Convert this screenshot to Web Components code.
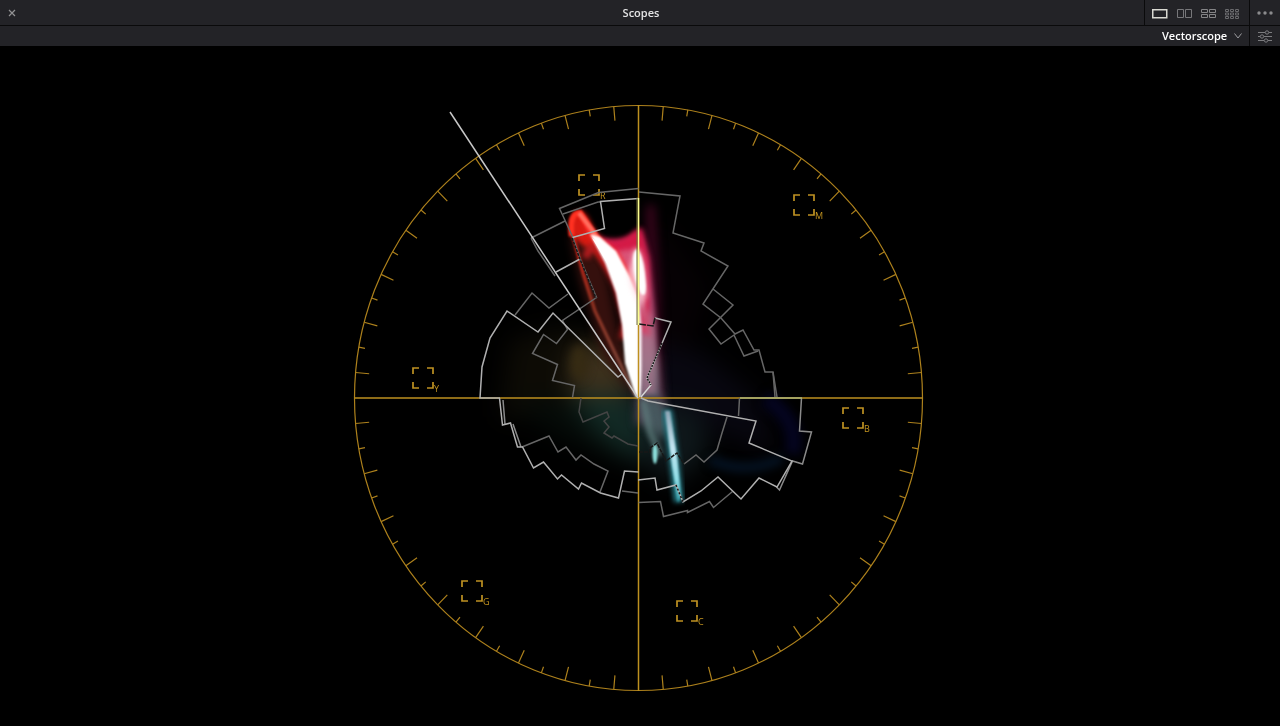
<!DOCTYPE html>
<html lang="en">
<head>
<meta charset="utf-8">
<title>Scopes</title>
<style>
html, body { margin: 0; height: 100%; background: #000; }
body { font-family: "Open Sans", "Noto Sans", sans-serif; font-size: 11px; font-weight: 600; color: #e4e4e5; }
</style>
</head>
<body>
<scopes-app></scopes-app>

<template id="app">
<style>
:host { display: flex; flex-direction: column; height: 100vh; min-height: 320px; }
vector-scope { flex: 1; min-height: 0; }
</style>
<title-bar>Scopes</title-bar>
<scope-toolbar></scope-toolbar>
<vector-scope></vector-scope>
</template>

<template id="titlebar">
<style>
:host { display: grid; grid-template-columns: 1fr auto 1fr; align-items: stretch; height: 25px; background: #232327; border-bottom: 1px solid #0a0a0b; }
button { background: none; border: 0; padding: 0; margin: 0; display: flex; align-items: center; justify-content: center; }
h1 { margin: 0; font: inherit; line-height: 26px; padding-left: 2px; }
.close { width: 24px; }
.end { display: flex; justify-content: flex-end; }
.layouts { display: flex; align-items: center; gap: 8px; padding: 1px 9px 0 7px; border-left: 1px solid #0a0a0b; }
.more { width: 31px; border-left: 1px solid #0a0a0b; }
svg { display: block; }
</style>
<button class="close" aria-label="Close"><svg width="8" height="8" viewBox="0 0 8 8" stroke="#929294" stroke-width="1.2"><path d="M1 1l6 6M7 1l-6 6"/></svg></button>
<h1><slot></slot></h1>
<div class="end">
<div class="layouts">
<button aria-label="Single view"><svg width="16" height="10" viewBox="0 0 16 10"><path d="M.75.75h14v8H.75z" fill="none" stroke="#d9d9d2" stroke-width="1.5"/></svg></button>
<button aria-label="Two views"><svg width="16" height="10" viewBox="0 0 16 10" fill="none" stroke="#77777a"><path d="M1.500.5h6v8h-6zM9.500.5h6v8h-6z"/></svg></button>
<button aria-label="Four views"><svg width="16" height="10" viewBox="0 0 16 10" fill="none" stroke="#858587"><path d="M1.500.5h6v3h-6zM9.500.5h6v3h-6zM1.500 5.500h6v3h-6zM9.500 5.500h6v3h-6z"/></svg></button>
<button aria-label="Nine views"><svg width="16" height="10" viewBox="0 0 16 10" fill="none" stroke="#69696c"><path d="M1.500.500h3v2h-3zM6.500.5h3v2h-3zM11.500.5h3v2h-3zM1.500 4h3v2h-3zM6.500 4h3v2h-3zM11.500 4h3v2h-3zM1.500 7.500h3v2h-3zM6.500 7.500h3v2h-3zM11.500 7.500h3v2h-3z"/></svg></button>
</div>
<button class="more" aria-label="Options"><svg width="16" height="4" viewBox="0 0 16 4" fill="#8b8b8d"><circle cx="2" cy="2" r="1.700"/><circle cx="8" cy="2" r="1.700"/><circle cx="14" cy="2" r="1.700"/></svg></button>
</div>
</template>

<template id="toolbar">
<style>
:host { display: flex; justify-content: flex-end; height: 20px; background: #232327; }
.picker { position: relative; display: flex; align-items: center; }
select { appearance: none; background: transparent; border: 0; margin: 0 1px 0 0; padding: 0 20px 0 0; font: inherit; line-height: 20px; color: #fff; height: 20px; }
.picker svg { position: absolute; right: 7px; top: 7px; pointer-events: none; }
button { background: none; border: 0; border-left: 1px solid #0a0a0b; width: 31px; padding: 0; margin: 0; display: flex; align-items: center; justify-content: center; }
</style>
<div class="picker">
<select aria-label="Scope type"><option>Vectorscope</option></select>
<svg width="8" height="6" viewBox="0 0 8 6" fill="none" stroke="#9c9c9f"><path d="M.5.5L4 5 7.500.5"/></svg>
</div>
<button aria-label="Scope settings"><svg width="14" height="13" viewBox="0 0 14 13" fill="none" stroke="#7c7c7f"><path d="M0 2.500h7M11 2.500h3M0 6.500h2M6 6.500h8M0 10.500h6M10 10.500h4"/><circle cx="9" cy="2.500" r="1.700"/><circle cx="4" cy="6.500" r="1.700"/><circle cx="8" cy="10.500" r="1.700"/></svg></button>
</template>

<template id="scope">
<style>
:host { display: block; background: #000; overflow: hidden; }
svg { display: block; width: 100%; height: 100%; }
filter { color-interpolation-filters: sRGB; }
text { font-family: "Open Sans", "Noto Sans", sans-serif; font-size: 9px; font-weight: 400; fill: #c3941f; }
</style>
<svg viewBox="0 46 1280 680" role="img" aria-label="Vectorscope">
<defs>
<filter id="b1" x="-50%" y="-50%" width="200%" height="200%"><feGaussianBlur stdDeviation="1.3"/></filter>
<filter id="b2" x="-50%" y="-50%" width="200%" height="200%"><feGaussianBlur stdDeviation="2.5"/></filter>
<filter id="b5" x="-80%" y="-50%" width="260%" height="200%"><feGaussianBlur stdDeviation="5"/></filter>
<filter id="b12" x="-80%" y="-80%" width="260%" height="260%"><feGaussianBlur stdDeviation="12"/></filter>
<linearGradient id="pink" x1="0" y1="0" x2="0" y2="1"><stop offset="0" stop-color="#d01548"/><stop offset=".45" stop-color="#b04870"/><stop offset=".8" stop-color="#806878"/><stop offset="1" stop-color="#585060"/></linearGradient>
<linearGradient id="rim" x1="0" y1="0" x2="0" y2="1"><stop offset="0" stop-color="#ff2015"/><stop offset=".4" stop-color="#a83824"/><stop offset="1" stop-color="#7a5348"/></linearGradient>
<linearGradient id="cyan" x1="0" y1="0" x2="0" y2="1"><stop offset="0" stop-color="#8fa5b5"/><stop offset=".4" stop-color="#c4e6f2"/><stop offset=".75" stop-color="#8fdde6"/><stop offset="1" stop-color="#2f9aa6"/></linearGradient>
</defs>
<g style="mix-blend-mode:screen">
<g filter="url(#b12)">
<path d="M510 340l60-15 60 70v22H500z" fill="#0d0b05"/>
<path d="M575 350q30-22 55 10l10 45h-65q-10-20 0-55z" fill="#3c301c"/>
<path d="M515 400h120v60q-80-10-120-60z" fill="#050b08"/>
<path d="M570 395h120l-10 85-45-20q-40-20-65-65z" fill="#122a25"/>
<path d="M645 335l60 20 52 42 20 60-80-35-70-25z" fill="#080710"/>
<path d="M650 220l18 10 40 60-20 60-50-10z" fill="#060104"/>
<path d="M640 400l60 10 10 40-35 35-35-25z" fill="#0e171a"/>
</g>
<ellipse cx="579" cy="362" rx="9" ry="17" fill="#362b13" filter="url(#b5)"/>
<path d="M640 352l18 4 6 50-8 18h-20z" fill="#554a5a" filter="url(#b5)"/>
<g fill="none" filter="url(#b5)">
<path d="M765 398q36 24 27 56" stroke="#04041f" stroke-width="16"/>
<path d="M710 460q38 16 72-2" stroke="#051426" stroke-width="9"/>
</g>
<path d="M646 205h9l5 83 2 117h-16z" fill="#36041a" filter="url(#b5)"/>
<path d="M578 219l22 20 16 80 18 75-30-38-24-75-9-42z" fill="#35100d" filter="url(#b5)"/>
<path d="M594 236q24 7 38-2 8-10 11-4l7 28 6 65 5 75h-21l-9-60-18-62z" fill="url(#pink)" filter="url(#b2)"/>
<path d="M602 240q18 6 30-6 6-6 10 6l5 22 3 75-12-6-14-55z" fill="#d41a46" filter="url(#b2)"/>
<path d="M615 252q14-4 24-2l6 50-2 20-14-30z" fill="#dc6c8c" opacity=".7" filter="url(#b2)"/>
<path d="M571 235q-3-24 9-24 8 1 14 21l7 18 12 28-20-27-11-6z" fill="#d91b12" filter="url(#b2)"/>
<path d="M572 236q-3-23 8-23l12 19 18 22" fill="none" stroke="#ff3021" stroke-width="6" filter="url(#b1)"/>
<path d="M573 235l10 38 12 38 40 84" fill="none" stroke="url(#rim)" stroke-width="3.500" opacity=".8" filter="url(#b1)"/>
<path d="M586 258q5-18 14-8l17 36 9 35-3 18" fill="none" stroke="#b31c1e" stroke-width="8" filter="url(#b2)"/>
<path d="M581 216l20 22 17 14 15 27-2 50-9-30-11-36-21-27z" fill="#ff3030" filter="url(#b2)"/>
<path d="M579 213l13 17 12 20" fill="none" stroke="#ff7060" stroke-width="4" filter="url(#b1)"/>
<path d="M590 234l10 3 16 14 14 26 9 22 3 30v40l-1 29h-5l-11-35-3-38-6-32-11-30z" fill="#fff" filter="url(#b1)"/>
<path d="M592 238l21 16 14 24 8 22 5 32 1 32-1 33h-2l-10-34-3-38-6-31-11-29z" fill="#fff"/>
<path d="M635 247q7 1 10 23l2 25-6 14-10-22-3-14z" fill="#ffd8df" opacity=".75" filter="url(#b2)"/>
<path d="M637 249q7 6 9 37 0 12-5 8-8-14-8-34 0-9 4-11z" fill="#fff" filter="url(#b1)"/>
<path d="M640 297l12 20 4 78h-15z" fill="#c4859e" opacity=".45" filter="url(#b2)"/>
<path d="M642 397h18l10 27-10 18-13-17z" fill="#46585e" filter="url(#b5)"/>
<path d="M643 400l7 32 10 23" fill="none" stroke="#5c7b7b" stroke-width="7" opacity=".75" filter="url(#b2)"/>
<ellipse cx="655" cy="454" rx="2.500" ry="10" fill="#8de0dc" filter="url(#b1)"/>
<path d="M667 410l7 50 5 42" fill="none" stroke="#257984" stroke-width="10" filter="url(#b2)"/>
<path d="M665 411l5 0 7 45 4 40-3 7-6-37z" fill="url(#cyan)" filter="url(#b1)"/>
</g>
<g fill="none" stroke="#ad811c" stroke-width="1.200">
<ellipse cx="638.500" cy="398" rx="284" ry="292.500"/>
<path d="M638.500 105v586M354.500 398h568" stroke="#bd901f" stroke-width="1.500"/>
<path id="ticks"/>
</g>
<g id="targets"></g>
<g fill="none" stroke-width="1.500" stroke="#666">
<path d="M638.500 188.500l-40 4-39 16 13 28 8 23 16 38-34 23 5 9-11 14-13-9-11 19 25 11-5 16 22 5-2 12"/>
<path d="M563 214l35-12 2 0M531 238l34-17M531 238l7 13 17 25M568 294l-19 14-17-15-17 22"/>
<path d="M639 192l41 4-7 37 31 10-3 8 27 15-25 38 18 14 14 16 8-4 11 20h5l6 22h8l4 25"/>
<path d="M713 289l20 16-24 24 12 15 13-9 10 21 14-5M773 372l2 25"/>
<path d="M522 447l27-11 9 16 8-5 10 13 5-5 13 9 14 7-8 21M622 491l16 2M638.500 502.500l22-1 3 15 24-6v2l22-11 4 6 19-16"/>
<path d="M739.500 398l-1 18M727 417l-5 16-5 17-13 12-8-7-12 9"/>
<path d="M581 398l-2 14 4 10 24-10 2 5-5 4 5 6-5 6 8 5 2-2 14 8 10 2" stroke="#444"/>
<path d="M801.500 398l-2 33 12 1-9 32-10-3-13 29-3-3M503 400l2 24M513 424l8 23" stroke="#8a8a8a"/>
</g>
<g fill="none" stroke="#b0b0b0" stroke-width="1.500">
<path d="M450 112l188 286" stroke="#c8c8c8"/>
<path d="M638.500 198.500l-38 3 4 27-32 9M556 272l24-13"/>
<path d="M500 398h-20l2-31 8-29 17-27 31 21 15-19 65 64 4-3"/>
<path d="M499.500 398l3 27 8-2 7 24h5l11 21 10-6 14 17 4-4 17 14 3-6 19 10 18 5 6-27 14 1"/>
<path d="M641 398l7 3 108 20-7 22 43 18-15 26-18-9-18 21-23-22-17 14-18 11-7-17-19 5-2-12-17 2"/>
<path d="M655 318l16 4-16 38"/>
</g>
<g fill="none" stroke="#171717" stroke-width="1.500">
<path d="M572 238l8 21 16 39" stroke-dasharray="3 1"/>
<path d="M639 324l14 2 2-8" stroke-dasharray="7 1"/>
<path d="M655 360l-8 18 4 7-10 12" stroke="#d5d5d5"/>
<path d="M662 343l-15 35 4 7" stroke-dasharray="2 1"/>
<path d="M639 452h11v-4l7-5 9 18 11-8 7 11" stroke-dasharray="4 1"/>
<path d="M676 485l7 17" stroke-dasharray="2 2"/>
</g>
<path d="M638.500 198v127" stroke="#fbff91" stroke-width="1.500"/>
<path d="M637 198v127" stroke="#70703a"/>
<path d="M740 398h62" stroke="#abb578" stroke-width="1.500"/>
</svg>
</template>

<script>
const attach = (el, id) => {
  const root = el.attachShadow({ mode: "open" });
  root.append(document.getElementById(id).content.cloneNode(true));
  return root;
};

class TitleBar extends HTMLElement {
  constructor() { super(); attach(this, "titlebar"); }
}
class ScopeToolbar extends HTMLElement {
  constructor() { super(); attach(this, "toolbar"); }
}
class VectorScope extends HTMLElement {
  constructor() {
    super();
    const root = attach(this, "scope");
    // Graduations: a long tick at 5, 15, 25 degrees and a short one between them.
    let d = "";
    for (let a = 5; a < 360; a += 5) {
      if (a % 90 === 0) continue;
      const t = a * Math.PI / 180;
      const inner = a % 10 ? 0.952 : 0.978;
      const x = Math.sin(t) * 284, y = -Math.cos(t) * 292.5;
      d += `M${638.5 + x} ${398 + y}L${638.5 + x * inner} ${398 + y * inner}`;
    }
    root.getElementById("ticks").setAttribute("d", d);
    // Colour targets: name and centre of each box.
    const targets = [["R", 589, 185], ["M", 804, 205], ["Y", 423, 378], ["B", 853, 418], ["G", 472, 591], ["C", 687, 611]];
    root.getElementById("targets").innerHTML = targets.map(([n, x, y]) =>
      `<path transform="translate(${x} ${y})" d="M-10-4V-10H-4M4-10H10V-4M10 4V10H4M-4 10H-10V4" fill="none" stroke="#be9122" stroke-width="1.700"/><text x="${x + 11}" y="${y + 14}">${n}</text>`).join("");
  }
}
class ScopesApp extends HTMLElement {
  constructor() { super(); attach(this, "app"); }
}
customElements.define("title-bar", TitleBar);
customElements.define("scope-toolbar", ScopeToolbar);
customElements.define("vector-scope", VectorScope);
customElements.define("scopes-app", ScopesApp);
</script>
</body>
</html>
